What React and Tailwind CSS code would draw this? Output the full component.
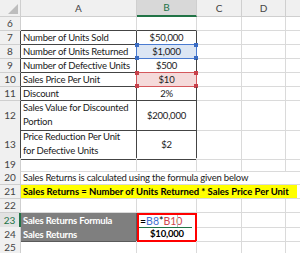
import React from 'react';

const grid = 'grid grid-cols-[21px_116px_60px_45px_44px_1fr]';
const gl = 'border-r border-b border-[#dadada]';
const dk = 'border-r border-b border-[#444]';

const RowHead = ({ n, dark, active }) => (
  <div
    className={`flex items-center justify-center border-b border-[#cfcfcf] text-[10px] tracking-normal ${
      active
        ? 'bg-[#e2e2e2] text-[#217346] border-r-2 border-r-[#217346]'
        : dark
        ? 'bg-[#f0f0f0] text-[#444] border-r border-r-[#444]'
        : 'bg-[#f0f0f0] text-[#444] border-r border-r-[#cfcfcf]'
    }`}
  >
    {n}
  </div>
);

const Corners = ({ color }) => (
  <>
    <span className={`absolute -left-[2px] -top-[2px] w-[4px] h-[4px] ${color}`} />
    <span className={`absolute -right-[2px] -top-[2px] w-[4px] h-[4px] ${color}`} />
    <span className={`absolute -left-[2px] -bottom-[2px] w-[4px] h-[4px] ${color}`} />
    <span className={`absolute -right-[2px] -bottom-[2px] w-[4px] h-[4px] ${color}`} />
  </>
);

const tableRows = [
  { n: 7, label: 'Number of Units Sold', value: '$50,000' },
  { n: 8, label: 'Number of Units Returned', value: '$1,000', hl: 'blue' },
  { n: 9, label: 'Number of Defective Units', value: '$500' },
  { n: 10, label: 'Sales Price Per Unit', value: '$10', hl: 'red' },
  { n: 11, label: 'Discount', value: '2%' },
];

const App = () => {
  return (
    <div className="w-[300px] h-[253px] overflow-hidden bg-white text-[9.5px] tracking-[-0.2px] leading-[13px] text-[#1a1a1a] font-['Lato','Liberation_Sans',sans-serif]">
      {/* Column headers */}
      <div className={`${grid} h-[17px] bg-[#f0f0f0] text-[#444] text-[10px] tracking-normal`}>
        <div className="relative border-r border-b border-[#cfcfcf]">
          <svg className="absolute right-[2px] bottom-[2px]" width="10" height="10" viewBox="0 0 10 10">
            <polygon points="10,0 10,10 0,10" fill="#bdbdbd" />
          </svg>
        </div>
        <div className="flex items-center justify-center border-r border-b border-[#cfcfcf]">A</div>
        <div className="flex items-center justify-center bg-[#d8d8d8] text-[#217346] border-r border-[#cfcfcf] border-b-2 border-b-[#217346]">B</div>
        <div className="flex items-center justify-center border-r border-b border-[#cfcfcf]">C</div>
        <div className="flex items-center justify-center border-r border-b border-[#cfcfcf]">D</div>
        <div className="border-b border-[#cfcfcf]" />
      </div>

      {/* Row 6 */}
      <div className={`${grid} h-[14px]`}>
        <RowHead n={6} />
        <div className="border-b border-r border-[#dadada] border-b-[#444]" />
        <div className="border-b border-r border-[#dadada] border-b-[#444]" />
        <div className={gl} />
        <div className={gl} />
        <div className="border-b border-[#dadada]" />
      </div>

      {tableRows.map((r) => (
        <div key={r.n} className={`${grid} h-[14px]`}>
          <RowHead n={r.n} dark />
          <div className={`${dk} flex items-center pl-[2px] whitespace-nowrap`}>{r.label}</div>
          <div
            className={`${dk} relative flex items-center justify-center ${
              r.hl === 'blue' ? 'bg-[#dce6f4]' : r.hl === 'red' ? 'bg-[#f5dada]' : ''
            }`}
          >
            {r.value}
            {r.hl === 'blue' && (
              <div className="absolute -left-px -top-px -right-px -bottom-px border-[1.5px] border-[#4a7bd0]">
                <Corners color="bg-[#3a6cc4]" />
              </div>
            )}
            {r.hl === 'red' && (
              <div className="absolute -left-px -top-px -right-px -bottom-px border-[1.5px] border-[#d4585c]">
                <Corners color="bg-[#c8404a]" />
              </div>
            )}
          </div>
          <div className={gl} />
          <div className={gl} />
          <div className="border-b border-[#dadada]" />
        </div>
      ))}

      {/* Row 12 */}
      <div className={`${grid} h-[29px]`}>
        <RowHead n={12} dark />
        <div className={`${dk} flex items-end pl-[2px] pb-px leading-[14px]`}>
          <span>Sales Value for Discounted<br />Portion</span>
        </div>
        <div className={`${dk} flex items-center justify-center`}>$200,000</div>
        <div className={gl} />
        <div className={gl} />
        <div className="border-b border-[#dadada]" />
      </div>

      {/* Row 13 */}
      <div className={`${grid} h-[28px]`}>
        <RowHead n={13} dark />
        <div className={`${dk} flex items-end pl-[2px] pb-px leading-[14px]`}>
          <span>Price Reduction Per Unit<br />for Defective Units</span>
        </div>
        <div className={`${dk} flex items-center justify-center`}>$2</div>
        <div className={gl} />
        <div className={gl} />
        <div className="border-b border-[#dadada]" />
      </div>

      {/* Row 19 */}
      <div className={`${grid} h-[13px]`}>
        <RowHead n={19} />
        <div className={gl} />
        <div className={gl} />
        <div className={gl} />
        <div className={gl} />
        <div className="border-b border-[#dadada]" />
      </div>

      {/* Row 20 */}
      <div className={`${grid} h-[14px]`}>
        <RowHead n={20} />
        <div className="col-span-5 border-b border-[#dadada] flex items-center pl-[2px] whitespace-nowrap">
          Sales Returns is calculated using the formula given below
        </div>
      </div>

      {/* Row 21 */}
      <div className={`${grid} h-[14px]`}>
        <RowHead n={21} />
        <div className="col-span-5 border-b border-[#dadada] flex">
          <div className="w-[276px] bg-[#ffff00] flex items-center pl-[2px] whitespace-nowrap font-bold text-black tracking-[-0.05px]">
            Sales Returns = Number of Units Returned * Sales Price Per Unit
          </div>
        </div>
      </div>

      {/* Row 22 */}
      <div className={`${grid} h-[14px]`}>
        <RowHead n={22} />
        <div className={gl} />
        <div className={gl} />
        <div className={gl} />
        <div className={gl} />
        <div className="border-b border-[#dadada]" />
      </div>

      {/* Row 23 */}
      <div className={`${grid} h-[14px]`}>
        <RowHead n={23} active />
        <div className="bg-[#7f7f7f] border-r border-b border-[#5a5a5a] border-b-[#a6a6a6] flex items-center pl-[2px] font-bold text-white whitespace-nowrap">
          Sales Returns Formula
        </div>
        <div className="relative border-2 border-b-0 border-[#ff0000] flex items-center pl-px text-black text-[10.5px] tracking-normal">
          =<span className="text-[#3f6fd1]">B8</span>*<span className="text-[#d0454c]">B10</span>
          <span className="absolute left-[38px] top-0 bottom-0 w-px bg-[#bdbdbd]" />
          <span className="absolute left-0 right-[3px] bottom-0 h-[1.5px] bg-[#217346]" />
        </div>
        <div className={gl} />
        <div className={gl} />
        <div className="border-b border-[#dadada]" />
      </div>

      {/* Row 24 */}
      <div className={`${grid} h-[14px]`}>
        <RowHead n={24} />
        <div className="bg-[#7f7f7f] border-r border-b border-[#5a5a5a] flex items-center pl-[2px] font-bold text-white whitespace-nowrap">
          Sales Returns
        </div>
        <div className="border-2 border-t-0 border-[#ff0000] flex items-center justify-center font-bold text-black">
          $10,000
        </div>
        <div className={gl} />
        <div className={gl} />
        <div className="border-b border-[#dadada]" />
      </div>

      {/* Row 25 */}
      <div className={`${grid} h-[14px]`}>
        <RowHead n={25} />
        <div className={gl} />
        <div className={gl} />
        <div className={gl} />
        <div className={gl} />
        <div className="border-b border-[#dadada]" />
      </div>
    </div>
  );
};

export default App;
